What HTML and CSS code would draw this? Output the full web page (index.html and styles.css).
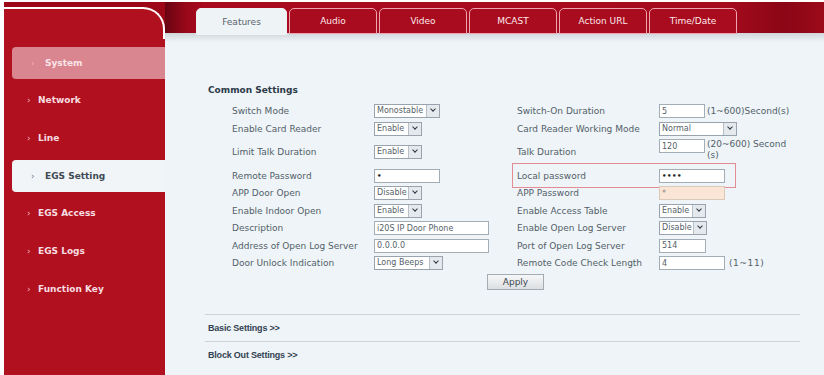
FILE: index.html
```html
<!DOCTYPE html>
<html>
<head>
<meta name="viewport" content="width=device-width, initial-scale=1.0">
<title>EGS Setting - Features</title>
<link rel="stylesheet" href="styles.css">
</head>
<body>

<div class="frame">
    <aside class="nav-col">
        <ul class="nav">
            <li class="item soft"><span class="chev">&rsaquo;</span>System</li>
            <li class="item"><span class="chev">&rsaquo;</span>Network</li>
            <li class="item"><span class="chev">&rsaquo;</span>Line</li>
            <li class="item on"><span class="chev">&rsaquo;</span>EGS Setting</li>
            <li class="item"><span class="chev">&rsaquo;</span>EGS Access</li>
            <li class="item"><span class="chev">&rsaquo;</span>EGS Logs</li>
            <li class="item"><span class="chev">&rsaquo;</span>Function Key</li>
        </ul>
    </aside>

    <main class="main">
        <div class="topbar">
            <div class="tab current">Features</div>
            <div class="tab">Audio</div>
            <div class="tab">Video</div>
            <div class="tab">MCAST</div>
            <div class="tab">Action URL</div>
            <div class="tab">Time/Date</div>
        </div>
        <div class="shade"></div>

        <div class="content">
            <h3 class="title">Common Settings</h3>
            <div class="form">
                <div class="row">
                    <div class="pair">
                        <span class="lbl">Switch Mode</span>
                        <span class="sel w66"><span class="val">Monostable</span><span class="arr"></span></span>
                    </div>
                    <div class="pair">
                        <span class="lbl">Switch-On Duration</span>
                        <input class="inp w46" type="text" value="5">
                        <span class="note">(1~600)Second(s)</span>
                    </div>
                </div>
                <div class="row">
                    <div class="pair">
                        <span class="lbl">Enable Card Reader</span>
                        <span class="sel w48"><span class="val">Enable</span><span class="arr"></span></span>
                    </div>
                    <div class="pair">
                        <span class="lbl">Card Reader Working Mode</span>
                        <span class="sel w78"><span class="val">Normal</span><span class="arr"></span></span>
                    </div>
                </div>
                <div class="row tall">
                    <div class="pair">
                        <span class="lbl">Limit Talk Duration</span>
                        <span class="sel w48"><span class="val">Enable</span><span class="arr"></span></span>
                    </div>
                    <div class="pair">
                        <span class="lbl">Talk Duration</span>
                        <span class="stack">
                            <input class="inp w46" type="text" value="120">
                            <span class="note wrap">(20~600) Second (s)</span>
                        </span>
                    </div>
                </div>
                <div class="row">
                    <div class="pair">
                        <span class="lbl">Remote Password</span>
                        <input class="inp w66 pw" type="password" value="1">
                    </div>
                    <div class="pair hl">
                        <span class="lbl">Local password</span>
                        <input class="inp w66 pw" type="password" value="1234">
                    </div>
                </div>
                <div class="row">
                    <div class="pair">
                        <span class="lbl">APP Door Open</span>
                        <span class="sel w48"><span class="val">Disable</span><span class="arr"></span></span>
                    </div>
                    <div class="pair">
                        <span class="lbl">APP Password</span>
                        <input class="inp w66 off" type="text" value="*" disabled>
                    </div>
                </div>
                <div class="row">
                    <div class="pair">
                        <span class="lbl">Enable Indoor Open</span>
                        <span class="sel w48"><span class="val">Enable</span><span class="arr"></span></span>
                    </div>
                    <div class="pair">
                        <span class="lbl">Enable Access Table</span>
                        <span class="sel w47"><span class="val">Enable</span><span class="arr"></span></span>
                    </div>
                </div>
                <div class="row">
                    <div class="pair">
                        <span class="lbl">Description</span>
                        <input class="inp w115" type="text" value="i20S IP Door Phone">
                    </div>
                    <div class="pair">
                        <span class="lbl">Enable Open Log Server</span>
                        <span class="sel w48"><span class="val">Disable</span><span class="arr"></span></span>
                    </div>
                </div>
                <div class="row">
                    <div class="pair">
                        <span class="lbl">Address of Open Log Server</span>
                        <input class="inp w115" type="text" value="0.0.0.0">
                    </div>
                    <div class="pair">
                        <span class="lbl">Port of Open Log Server</span>
                        <input class="inp w47" type="text" value="514">
                    </div>
                </div>
                <div class="row">
                    <div class="pair">
                        <span class="lbl">Door Unlock Indication</span>
                        <span class="sel w69"><span class="val">Long Beeps</span><span class="arr"></span></span>
                    </div>
                    <div class="pair">
                        <span class="lbl">Remote Code Check Length</span>
                        <input class="inp w66" type="text" value="4">
                        <span class="note range">(1~11)</span>
                    </div>
                </div>
                <button class="apply">Apply</button>
            </div>

            <div class="more">Basic Settings &gt;&gt;</div>
            <div class="more">Block Out Settings &gt;&gt;</div>
        </div>
    </main>
</div>

</body>
</html>
```

FILE: styles.css
```css
body {
    margin: 0;
    padding: 2px 0 0 4px;
    background: #fff;
    font-family: "DejaVu Sans", Verdana, sans-serif;
    font-size: 9px;
    color: #535e69;
    overflow: hidden;
}
.frame {
    display: grid;
    grid-template-columns: 161px 1fr;
    height: 373px;
}

/* left menu */
.nav-col {
    background: #9c0818;
    padding-top: 5px;
}
.nav {
    position: relative;
    margin: 0;
    padding: 37px 0 0 0;
    list-style: none;
    height: 100%;
    box-sizing: border-box;
    background: #b1111f;
    border-top-right-radius: 22px;
}
.nav::before {
    content: "";
    position: absolute;
    top: 0;
    left: 0;
    right: 0;
    height: 30px;
    border-top: 2px solid #fff;
    border-right: 2px solid #fff;
    border-top-right-radius: 22px;
}
.item {
    height: 37.67px;
    display: flex;
    align-items: center;
    padding-left: 23px;
    font-weight: bold;
    color: #f7dde1;
}
.chev {
    width: 11px;
    font-size: 9px;
    font-weight: normal;
    color: #f1b5bd;
}
.item.soft,
.item.on {
    height: 32px;
    margin: 3px 0 2.67px 8px;
    padding-left: 19px;
    border-radius: 4px 0 0 4px;
}
.item.soft .chev,
.item.on .chev {
    width: 14px;
}
.item.soft {
    background: #d98690;
    color: #fbe4e7;
}
.item.on {
    background: #f1f5f7;
    color: #3e4a55;
}
.item.on .chev {
    color: #6d7780;
}

/* header and tabs */
.main {
    background: #eef4f7;
}
.topbar {
    height: 31px;
    display: flex;
    align-items: flex-end;
    gap: 2px;
    padding-left: 31px;
    background: linear-gradient(to right, #6a0412 0, #9a0819 22px, #a80b1d 40px, #a60b1d 560px, #8a0616 620px, #9d0a1a 100%);
}
.tab {
    width: 88px;
    height: 26px;
    margin-bottom: -1px;
    box-sizing: border-box;
    border: 1px solid #eea4ae;
    border-radius: 5px 5px 0 0;
    background: #a90c1f;
    color: #fde7ea;
    display: flex;
    align-items: center;
    justify-content: center;
}
.tab.current {
    width: 91px;
    height: 27px;
    margin-bottom: -2px;
    background: #eef3f5;
    border-color: #eef3f5;
    color: #59636d;
}
.shade {
    height: 9px;
    background: linear-gradient(#cfd5d8, #eef4f7);
}

/* form */
.content {
    padding: 41.5px 24px 0 40px;
}
.title {
    margin: 0 0 6px 3px;
    font-size: 9px;
    line-height: 13px;
    color: #2c3a48;
}
.form {
    padding-left: 27px;
}
.row {
    display: flex;
    height: 17.5px;
}
.row.tall {
    height: 29.5px;
}
.pair {
    position: relative;
    display: flex;
    align-items: center;
    width: 285px;
}
.lbl {
    width: 142px;
    flex-shrink: 0;
    white-space: nowrap;
}
.pair.hl::after {
    content: "";
    position: absolute;
    left: -5px;
    top: -4px;
    width: 222px;
    height: 23px;
    border: 1px solid #e38c93;
}
.stack {
    align-self: flex-start;
    display: flex;
    padding-top: 1.5px;
}
.inp {
    height: 14px;
    box-sizing: border-box;
    border: 1px solid #a3adb6;
    padding: 0 2px;
    margin: 0;
    background: #fff;
    font-family: "DejaVu Sans", Verdana, sans-serif;
    font-size: 8px;
    color: #555f69;
}
.inp.pw {
    font-size: 7px;
    font-weight: bold;
    color: #222;
    letter-spacing: 0.5px;
}
.inp.off {
    background: #fbe5d5;
    border-color: #d9c9bb;
    color: #8a8a8a;
}
.note {
    margin-left: 2px;
    white-space: nowrap;
}
.note.wrap {
    width: 85px;
    white-space: normal;
    line-height: 11px;
}
.note.range {
    margin-left: 4px;
    letter-spacing: 0.6px;
}
.w46 { width: 46px; }
.w47 { width: 47px; }
.w48 { width: 48px; }
.w66 { width: 66px; }
.w69 { width: 69px; }
.w78 { width: 78px; }
.w115 { width: 115px; }

.sel {
    height: 14px;
    box-sizing: border-box;
    display: inline-flex;
    border: 1px solid #98a3ad;
    background: #fff;
    font-size: 8px;
    color: #555f69;
}
.sel .val {
    flex: 1;
    padding-left: 2px;
    line-height: 12px;
    overflow: hidden;
    white-space: nowrap;
}
.sel .arr {
    width: 12px;
    border-left: 1px solid #b7c0c8;
    background: #e4e9ed;
    display: flex;
    justify-content: center;
}
.sel .arr::after {
    content: "";
    width: 3px;
    height: 3px;
    margin-top: 2px;
    border-right: 1.5px solid #2d3640;
    border-bottom: 1.5px solid #2d3640;
    transform: rotate(45deg);
}
.apply {
    display: block;
    margin: 2px 0 0 255px;
    width: 57px;
    height: 16px;
    padding: 0;
    border: 1px solid #a4acb3;
    background: linear-gradient(#f6f7f8, #dcdfe2);
    font-family: "DejaVu Sans", Verdana, sans-serif;
    font-size: 9px;
    color: #3d4650;
}
.more {
    margin: 24px 2px 0 0;
    border-top: 1px solid #cdd4d8;
    height: 26px;
    line-height: 26px;
    padding-left: 3px;
    font-family: "Liberation Sans", Arial, sans-serif;
    font-weight: bold;
    font-size: 9px;
    letter-spacing: -0.2px;
    color: #334252;
}
.more + .more {
    margin-top: 0;
}
```
